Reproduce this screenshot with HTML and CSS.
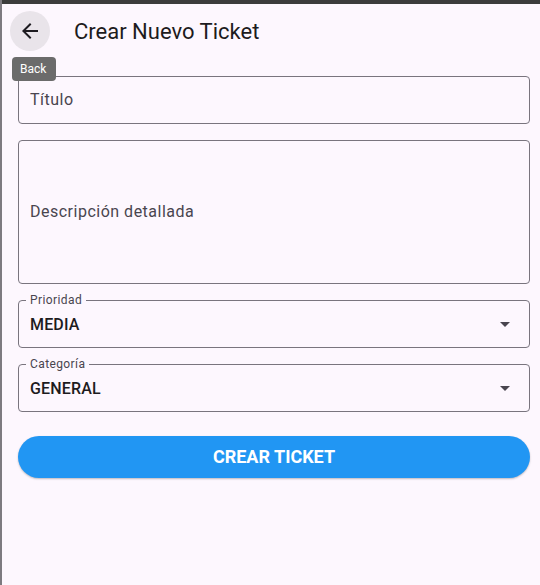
FILE: index.html
```html
<!DOCTYPE html>
<html lang="es">
<head>
<meta charset="utf-8">
<link rel="stylesheet" href="styles.css">
</head>
<body>
<div class="topbar"></div>
<div class="app">
  <header class="appbar">
    <button class="back" aria-label="Back">
      <svg width="24" height="24" viewBox="0 0 24 24"><path d="M20 11H7.83l5.59-5.59L12 4l-8 8 8 8 1.41-1.41L7.83 13H20v-2z" fill="#1d1b20"/></svg>
    </button>
    <h1 class="title">Crear Nuevo Ticket</h1>
    <div class="tooltip">Back</div>
  </header>
  <main class="form">
    <div class="field text"><span class="placeholder">Título</span></div>
    <div class="field text multi"><span class="placeholder">Descripción detallada</span></div>
    <div class="field select">
      <span class="float">Prioridad</span>
      <span class="value">MEDIA</span>
      <svg class="drop" width="24" height="24" viewBox="0 0 24 24"><path d="M7 10l5 5 5-5z" fill="#49454f"/></svg>
    </div>
    <div class="field select">
      <span class="float">Categoría</span>
      <span class="value">GENERAL</span>
      <svg class="drop" width="24" height="24" viewBox="0 0 24 24"><path d="M7 10l5 5 5-5z" fill="#49454f"/></svg>
    </div>
    <button class="submit">CREAR TICKET</button>
  </main>
</div>
</body>
</html>
```
FILE: styles.css
```css
* { box-sizing: border-box; }
html, body { margin: 0; padding: 0; }
body {
  background: #fdf7fe;
  font-family: Roboto, "Noto Sans", sans-serif;
  color: #1d1b20;
  width: 540px;
  height: 585px;
  overflow: hidden;
  border-left: 2px solid #7d7a80;
}
.topbar { height: 4px; background: #3c3c3c; }
.app { position: relative; }
.appbar {
  position: relative;
  height: 56px;
  display: flex;
  align-items: center;
  padding-left: 8px;
}
.back {
  width: 40px; height: 40px;
  border: none; border-radius: 50%;
  background: #e9e4ea;
  display: flex; align-items: center; justify-content: center;
  padding: 0; margin-top: -2px;
}
.title {
  margin: 0 0 0 24px;
  font-size: 22px;
  font-weight: 400;
  color: #1d1b20;
  margin-top: -2px;
}
.tooltip {
  position: absolute;
  left: 10px; top: 53px;
  width: 44px; height: 24px;
  background: #6b6b6b;
  border-radius: 4px;
  color: #fff;
  font-size: 12px;
  line-height: 24px;
  padding-left: 8px;
  z-index: 2;
}
.form {
  padding: 16px 10px 0 16px;
  display: flex;
  flex-direction: column;
  gap: 16px;
}
.field {
  position: relative;
  height: 48px;
  border: 1px solid #79747e;
  border-radius: 4px;
  display: flex;
  align-items: center;
  padding-left: 11px;
}
.field.text { padding-bottom: 2px; }
.field.multi { height: 144px; }
.placeholder { font-size: 16px; color: #49454f; letter-spacing: 0.5px; }
.float {
  position: absolute;
  left: 7px; top: -9px;
  background: #fdf7fe;
  padding: 0 4px;
  font-size: 12px;
  line-height: 16px;
  color: #49454f;
  letter-spacing: 0.4px;
}
.value { font-size: 16px; font-weight: 500; color: #1d1b20; flex: 1; letter-spacing: 0.15px; }
.drop { margin-right: 12px; }
.submit {
  margin-top: 8px;
  height: 42px;
  border: none;
  border-radius: 21px;
  background: #2196f3;
  color: #fff;
  font-family: Roboto, sans-serif;
  font-size: 18px;
  font-weight: 700;
  padding: 0 0 2px 0;
  box-shadow: 0 1px 2px rgba(0,0,0,0.25);
}
```
